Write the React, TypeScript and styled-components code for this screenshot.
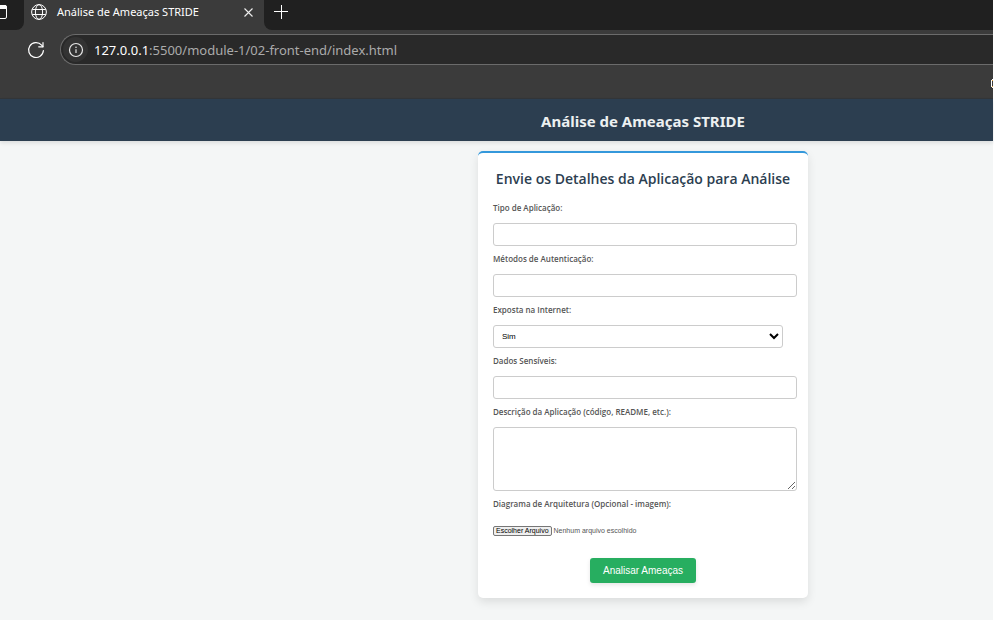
import React, { useState } from 'react';
import styled, { createGlobalStyle } from 'styled-components';

const chromeFont = '"Noto Sans", "Open Sans", sans-serif';
const pageFont = '"Open Sans", "Noto Sans", sans-serif';
const controlFont = '"Liberation Sans", Arial, sans-serif';

const GlobalStyle = createGlobalStyle`
  * { box-sizing: border-box; }
  html, body { margin: 0; background: #ffffff; }
  body { font-family: ${pageFont}; overflow-x: hidden; }
  button { font: inherit; }
`;

const Window = styled.div`
  display: flex;
  flex-direction: column;
  min-height: 100vh;
  margin-right: 1px;
  background: #f4f6f6;
`;

const Chrome = styled.div`
  background: #3b3b3b;
  border-bottom: 1px solid #333639;
`;

const TabStrip = styled.div`
  display: flex;
  height: 30px;
`;

const StripStart = styled.div`
  width: 24px;
  padding-top: 5px;
  background: #202020;
  border-bottom-right-radius: 8px;
  svg { display: block; }
`;

const StripEnd = styled.div`
  flex: 1;
  padding: 0 0 6px 5px;
  display: flex;
  align-items: center;
  background: #202020;
  border-bottom-left-radius: 8px;
`;

const Tab = styled.div`
  display: flex;
  align-items: center;
  gap: 10px;
  width: 240px;
  padding: 0 8px 6px 7px;
  color: #ffffff;
`;

const TabTitle = styled.span`
  flex: 1;
  font: 11px/16px ${chromeFont};
  white-space: nowrap;
`;

const IconButton = styled.button<{ $size: number }>`
  display: grid;
  place-items: center;
  flex: none;
  width: ${({ $size }) => $size}px;
  height: ${({ $size }) => $size}px;
  padding: 0;
  border: 0;
  border-radius: 50%;
  background: transparent;
  color: #ffffff;
  svg { display: block; }
`;

const Toolbar = styled.div`
  display: flex;
  align-items: center;
  gap: 12px;
  padding: 4px 0 0 24px;
`;

const AddressBar = styled.div`
  flex: 1;
  display: flex;
  align-items: center;
  gap: 6px;
  height: 31px;
  padding-left: 2px;
  border: 1px solid #6b6b6b;
  border-right: 0;
  border-radius: 16px 0 0 16px;
  background: #292929;
`;

const InfoButton = styled(IconButton)`
  background: #333333;
`;

const Address = styled.div`
  color: #ababab;
  font: 13px/20px ${chromeFont};
  white-space: nowrap;
  strong { color: #ffffff; font-weight: 400; }
`;

const Bookmarks = styled.div`
  display: flex;
  justify-content: flex-end;
  align-items: center;
  height: 33px;
  padding-top: 3px;
`;

const SiteHeader = styled.header`
  padding: 11px 0 9px 293px;
  background: #2c3e50;
  box-shadow: 0 2px 4px rgba(0, 0, 0, 0.1);
  text-align: center;
`;

const SiteTitle = styled.h1`
  margin: 0;
  color: #ecf0f1;
  font: 700 15px/22px ${chromeFont};
`;

const Main = styled.main`
  display: flex;
  justify-content: center;
  padding: 10px 0 20px 293px;
`;

const Card = styled.section`
  width: 330px;
  padding: 15px;
  border-top: 2px solid #3498db;
  border-radius: 5px;
  background: #ffffff;
  box-shadow: 0 4px 10px rgba(0, 0, 0, 0.1);
`;

const CardTitle = styled.h2`
  margin: 0 0 12px;
  color: #2c3e50;
  font: 600 14px/22px ${pageFont};
  text-align: center;
  white-space: nowrap;
`;

const Form = styled.form`
  display: flex;
  flex-direction: column;
  gap: 7px;
`;

const Field = styled.div`
  display: flex;
  flex-direction: column;
  align-items: flex-start;
  gap: 9px;
`;

const Label = styled.label`
  color: #555555;
  font: 600 8px/12px ${pageFont};
`;

const TextInput = styled.input`
  box-sizing: content-box;
  width: calc(100% - 10px);
  height: 9px;
  padding: 6px;
  border: 1px solid #cccccc;
  border-radius: 3px;
  background: #ffffff;
  font: 8px/9px ${controlFont};
`;

const TextArea = styled.textarea`
  box-sizing: content-box;
  display: block;
  width: calc(100% - 10px);
  height: 50px;
  padding: 6px;
  border: 1px solid #cccccc;
  border-radius: 3px;
  background: #ffffff;
  font: 8px/9px ${controlFont};
  resize: vertical;
`;

const Select = styled.select`
  width: calc(100% - 10px);
  height: 23px;
  padding: 0 4px;
  border: 1px solid #cccccc;
  border-radius: 3px;
  background: #ffffff;
  color: #000000;
  font: 8px/9px ${controlFont};
`;

const FilePicker = styled.div`
  position: relative;
  display: flex;
  align-items: center;
  gap: 2px;
  height: 23px;
  color: #555555;
  font: 7px/8px ${controlFont};
`;

const FileInput = styled.input`
  position: absolute;
  inset: 0;
  width: 100%;
  opacity: 0;
`;

const FileButton = styled.span`
  padding: 0 2px;
  border: 1px solid #767676;
  border-radius: 2px;
  background: #efefef;
  color: #000000;
`;

const SubmitButton = styled.button`
  align-self: center;
  height: 25px;
  margin-top: 9px;
  padding: 0 13px;
  border: 0;
  border-radius: 3px;
  background: #27ae60;
  box-shadow: 0 2px 4px rgba(0, 0, 0, 0.1);
  color: #ffffff;
  font: 10px/12px ${controlFont};
`;

const WindowIcon = () => (
  <svg width="8" height="14" viewBox="0 0 8 14" fill="none" aria-hidden="true">
    <path d="M0 .5H5a1.500 1.500 0 0 1 1.500 1.500v10A1.500 1.500 0 0 1 5 13.500H0" stroke="#fff" />
    <path d="M0 0h5.500L7 1.500V4H0z" fill="#fff" />
  </svg>
);

const GlobeIcon = () => (
  <svg width="16" height="16" viewBox="0 0 16 16" fill="none" stroke="#fff" aria-hidden="true">
    <circle cx="8" cy="8" r="7.400" />
    <ellipse cx="8" cy="8" rx="3.600" ry="7.400" />
    <path d="M1.200 5.500h13.600M1.200 10.500h13.600" />
  </svg>
);

const CloseIcon = () => (
  <svg width="9" height="9" viewBox="0 0 9 9" stroke="#eee" strokeWidth="1.100" aria-hidden="true">
    <path d="M.5.5l8 8M8.500.5l-8 8" />
  </svg>
);

const PlusIcon = () => (
  <svg width="14" height="14" viewBox="0 0 14 14" stroke="#fff" aria-hidden="true">
    <path d="M7.500 0v14M0 6.500h14" />
  </svg>
);

const ReloadIcon = () => (
  <svg width="18" height="18" viewBox="0 0 18 18" fill="none" stroke="#fff" strokeWidth="1.200" strokeLinecap="round" strokeLinejoin="round" aria-hidden="true">
    <path d="M16.400 9.500A7.400 7.400 0 1 1 14.600 4.200L15.900 5.700" />
    <path d="M16 1.500v4.300h-4.300" />
  </svg>
);

const InfoIcon = () => (
  <svg width="16" height="16" viewBox="0 0 16 16" fill="none" stroke="#e8e8e8" aria-hidden="true">
    <circle cx="8" cy="8" r="6.500" strokeWidth="1.200" />
    <path d="M8 7.200v3.800" strokeWidth="1.200" />
    <circle cx="8" cy="5.200" r=".8" fill="#e8e8e8" stroke="none" />
  </svg>
);

const BookmarkIcon = () => (
  <svg width="2" height="9" viewBox="0 0 2 9" aria-hidden="true">
    <path d="M0 1h1V0h1v1H1v7h1v1H1V8H0z" fill="#fff" />
    <path d="M1 1h1v1H1zM1 7h1v1H1z" fill="#e0a040" />
  </svg>
);

export default function App() {
  const [fileName, setFileName] = useState('Nenhum arquivo escolhido');

  return (
    <>
      <GlobalStyle />
      <Window>
        <Chrome>
          <TabStrip>
            <StripStart><WindowIcon /></StripStart>
            <Tab>
              <GlobeIcon />
              <TabTitle>Análise de Ameaças STRIDE</TabTitle>
              <IconButton $size={16} aria-label="Fechar guia"><CloseIcon /></IconButton>
            </Tab>
            <StripEnd>
              <IconButton $size={24} aria-label="Nova guia"><PlusIcon /></IconButton>
            </StripEnd>
          </TabStrip>
          <Toolbar>
            <IconButton $size={24} aria-label="Atualizar"><ReloadIcon /></IconButton>
            <AddressBar>
              <InfoButton $size={25} aria-label="Informações do site"><InfoIcon /></InfoButton>
              <Address><strong>127.0.0.1</strong>:5500/module-1/02-front-end/index.html</Address>
            </AddressBar>
          </Toolbar>
          <Bookmarks><BookmarkIcon /></Bookmarks>
        </Chrome>
        <SiteHeader>
          <SiteTitle>Análise de Ameaças STRIDE</SiteTitle>
        </SiteHeader>
        <Main>
          <Card>
            <CardTitle>Envie os Detalhes da Aplicação para Análise</CardTitle>
            <Form onSubmit={(event) => event.preventDefault()}>
              <Field>
                <Label htmlFor="tipo">Tipo de Aplicação:</Label>
                <TextInput id="tipo" type="text" />
              </Field>
              <Field>
                <Label htmlFor="autenticacao">Métodos de Autenticação:</Label>
                <TextInput id="autenticacao" type="text" />
              </Field>
              <Field>
                <Label htmlFor="exposta">Exposta na Internet:</Label>
                <Select id="exposta" defaultValue="sim">
                  <option value="sim">Sim</option>
                  <option value="nao">Não</option>
                </Select>
              </Field>
              <Field>
                <Label htmlFor="dados">Dados Sensíveis:</Label>
                <TextInput id="dados" type="text" />
              </Field>
              <Field>
                <Label htmlFor="descricao">Descrição da Aplicação (código, README, etc.):</Label>
                <TextArea id="descricao" />
              </Field>
              <Field>
                <Label htmlFor="diagrama">Diagrama de Arquitetura (Opcional - imagem):</Label>
                <FilePicker>
                  <FileButton aria-hidden="true">Escolher Arquivo</FileButton>
                  <span>{fileName}</span>
                  <FileInput
                    id="diagrama"
                    type="file"
                    accept="image/*"
                    onChange={(event) => setFileName(event.target.files?.[0]?.name ?? 'Nenhum arquivo escolhido')}
                  />
                </FilePicker>
              </Field>
              <SubmitButton type="submit">Analisar Ameaças</SubmitButton>
            </Form>
          </Card>
        </Main>
      </Window>
    </>
  );
}
